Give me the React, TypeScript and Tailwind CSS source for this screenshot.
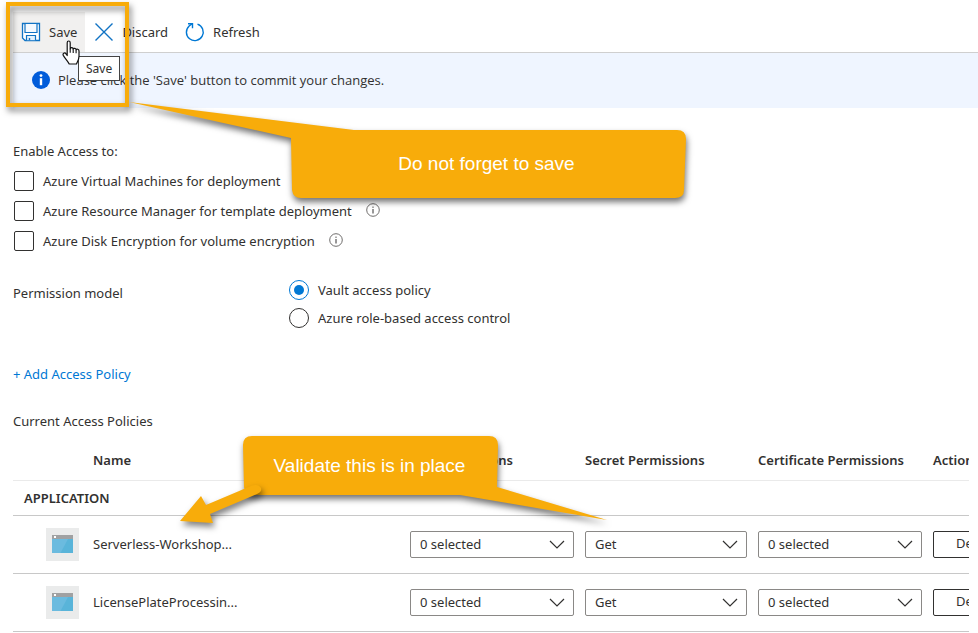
import type { ReactNode } from "react";

const SaveIcon = () => (
  <svg className="size-5 shrink-0" viewBox="0 0 20 20" fill="none" aria-hidden="true">
    <path d="M1.500 1.500h17v17H4l-2.500-2.500z" fill="#fff" stroke="#1173c4" strokeWidth="1.300" />
    <path d="M4 2v8.500h12V2" fill="#f4f9fe" stroke="#1173c4" strokeWidth="1.200" />
    <path d="M5.500 18.200v-4.700h9v4.700" fill="#e3f1fc" stroke="#1173c4" strokeWidth="1.200" />
    <path d="M8.500 18.200v-2.200" stroke="#1173c4" strokeWidth="1.400" />
  </svg>
);

const DiscardIcon = () => (
  <svg className="size-5 shrink-0" viewBox="0 0 20 20" fill="none" aria-hidden="true">
    <path d="M1.5 1.5l17 17M18.5 1.5l-17 17" stroke="#1173c4" strokeWidth="1.4" />
  </svg>
);

const RefreshIcon = () => (
  <svg className="size-5 shrink-0" viewBox="0 0 20 20" fill="none" aria-hidden="true">
    <path d="M12.500 2.200A8.400 8.400 0 1 1 4.200 3.900L7.200 1.800" stroke="#0078d4" strokeWidth="1.400" />
    <path d="M3 1.700h4.500v4.500" stroke="#0078d4" strokeWidth="1.400" />
  </svg>
);

const InfoBadge = () => (
  <svg className="size-[18px] shrink-0" viewBox="0 0 18 18" aria-hidden="true">
    <circle cx="9" cy="9" r="9" fill="#015cda" />
    <rect x="7.8" y="7.2" width="2.4" height="7" fill="#fff" />
    <circle cx="9" cy="4.6" r="1.4" fill="#fff" />
  </svg>
);

const InfoHint = () => (
  <svg className="mb-[3px] size-[14px] shrink-0" viewBox="0 0 14 14" fill="none" aria-hidden="true">
    <circle cx="7" cy="7" r="6.3" stroke="#605e5c" strokeWidth="0.9" />
    <path d="M7 6v4.5M7 3.6v1.2" stroke="#323130" strokeWidth="1" />
  </svg>
);

const AppIcon = () => (
  <span className="flex size-[33px] items-center justify-center bg-[#eaebeb]">
    <svg className="h-[18px] w-[21px]" viewBox="0 0 21 18" aria-hidden="true">
      <rect width="21" height="18" fill="#59b4d9" />
      <path d="M0 4h16L8.5 18H0z" fill="#6bbbdf" />
      <rect width="21" height="4" fill="#a0a1a2" />
      <rect x="2" y="1" width="2" height="2" fill="#fff" />
    </svg>
  </span>
);

const HandCursor = () => (
  <svg className="absolute left-[62px] top-[40px] h-[25px] w-[19px]" viewBox="0 0 19 25" aria-hidden="true">
    <path
      d="M5.2 15.5V2.8c0-2.4 3-2.4 3 0v6c.3-1.6 2.9-1.5 3 .3.5-1.3 2.9-1 2.9.7.6-1 2.9-.8 2.9 1.2v5.2c0 3.600-1.600 5.200-2.500 7.800H7.200C5.800 20.800 3.100 18.600 1.300 15.400c-1-1.900 1.400-3.300 2.700-1.600z"
      fill="#fff"
      stroke="#111"
      strokeWidth="1.2"
      strokeLinejoin="round"
    />
    <path d="M8.2 8.8v4M11.2 9.2v3.8M14.1 9.9v3.4" stroke="#111" strokeWidth="1.1" />
  </svg>
);

function ToolbarButton({ icon, label, active }: { icon: ReactNode; label: string; active?: boolean }) {
  return (
    <button type="button" className={`flex h-10 items-center gap-2 px-2 ${active ? "bg-[#f1f0ef]" : ""}`}>
      {icon}
      {label}
    </button>
  );
}

const accessOptions = [
  { id: "vm", label: "Azure Virtual Machines for deployment" },
  { id: "arm", label: "Azure Resource Manager for template deployment" },
  { id: "disk", label: "Azure Disk Encryption for volume encryption" },
];

const models = [
  { id: "vault", label: "Vault access policy" },
  { id: "rbac", label: "Azure role-based access control" },
];

const policies = [
  { name: "Serverless-Workshop...", key: "0 selected", secret: "Get", certificate: "0 selected" },
  { name: "LicensePlateProcessin...", key: "0 selected", secret: "Get", certificate: "0 selected" },
];

const columns = ["Name", "Key Permissions", "Secret Permissions", "Certificate Permissions", "Action"];

function PermissionSelect({ value, label }: { value: string; label: string }) {
  return (
    <div className="relative mr-[11px]">
      <select
        aria-label={label}
        defaultValue={value}
        className="block h-[27px] w-full appearance-none rounded-xs border border-[#8a8886] bg-white px-[9px]"
      >
        <option>{value}</option>
      </select>
      <svg
        className="pointer-events-none absolute right-[9px] top-[9px] h-[9px] w-4"
        viewBox="0 0 16 9"
        fill="none"
        aria-hidden="true"
      >
        <path d="M1 1l7 7 7-7" stroke="#323130" strokeWidth="1.2" />
      </svg>
    </div>
  );
}

function AccessOptions() {
  return (
    <fieldset>
      <legend className="h-5">Enable Access to:</legend>
      <div className="mt-[10px] flex flex-col gap-[10px] pl-px">
        {accessOptions.map((o) => (
          <div key={o.id} className="flex h-5 items-center">
            <input
              id={o.id}
              type="checkbox"
              className="size-5 shrink-0 appearance-none rounded-xs border border-[#323130] bg-white"
            />
            <label htmlFor={o.id} className="pl-[9px] pr-[14px]">
              {o.label}
            </label>
            <InfoHint />
          </div>
        ))}
      </div>
    </fieldset>
  );
}

function PermissionModel() {
  return (
    <div role="radiogroup" aria-labelledby="model" className="mt-[29px] grid grid-cols-[276px_1fr]">
      <span id="model" className="pt-[3px]">
        Permission model
      </span>
      <div className="flex flex-col gap-2">
        {models.map((m, i) => (
          <div key={m.id} className="flex h-5 items-center gap-[9px]">
            <input
              id={m.id}
              type="radio"
              name="model"
              defaultChecked={i === 0}
              className="grid size-5 shrink-0 appearance-none place-items-center rounded-full border border-[#323130] before:size-[10px] before:rounded-full checked:border-[#0078d4] checked:before:bg-[#0078d4]"
            />
            <label htmlFor={m.id}>{m.label}</label>
          </div>
        ))}
      </div>
    </div>
  );
}

function PolicyTable() {
  return (
    <div className="mr-[9px] overflow-hidden">
      <table className="w-[calc(100%+64px)] table-fixed border-collapse text-left">
        <colgroup>
          <col className="w-[80px]" />
          <col />
          <col className="w-[175px]" />
          <col className="w-[173px]" />
          <col className="w-[175px]" />
          <col className="w-[100px]" />
        </colgroup>
        <thead>
          <tr className="h-[41px] border-b border-[#eaeaea]">
            <th aria-label="Type" />
            {columns.map((c) => (
              <th key={c} className="pt-[2px] font-semibold">
                {c}
              </th>
            ))}
          </tr>
        </thead>
        <tbody>
          <tr className="h-[35px] border-b border-[#c8c8c8]">
            <th colSpan={6} className="pl-[11px] font-semibold">
              APPLICATION
            </th>
          </tr>
          {policies.map((p) => (
            <tr key={p.name} className="h-[58px] border-b border-[#c8c8c8]">
              <td className="pl-[33px]">
                <AppIcon />
              </td>
              <td>{p.name}</td>
              <td>
                <PermissionSelect value={p.key} label={`Key permissions for ${p.name}`} />
              </td>
              <td>
                <PermissionSelect value={p.secret} label={`Secret permissions for ${p.name}`} />
              </td>
              <td>
                <PermissionSelect value={p.certificate} label={`Certificate permissions for ${p.name}`} />
              </td>
              <td>
                <button
                  type="button"
                  className="block h-[27px] rounded-xs border border-[#323130] px-[22px] pb-[2px]"
                >
                  Delete
                </button>
              </td>
            </tr>
          ))}
        </tbody>
      </table>
    </div>
  );
}

function Annotations() {
  return (
    <>
      <div className="pointer-events-none absolute left-[6px] top-[2px] h-[105px] w-[123px] border-4 border-[#f8ac0a] drop-shadow-[2px_4px_3px_rgba(0,0,0,0.5)]" />
      <svg
        className="pointer-events-none absolute left-0 top-0 h-[633px] w-[978px] drop-shadow-[1px_4px_3px_rgba(0,0,0,0.55)]"
        viewBox="0 0 978 633"
        fill="#f8ac0a"
        aria-hidden="true"
      >
        <path d="M129 102L354 130H677Q686 130 686 139L684 190Q684 198 675 198H301Q293 198 292 190L291 138Z" />
        <path d="M252 436H489Q498 436 498 445L497 487L607 520L460 495H253Q245 495 244 487L243 445Q243 436 252 436Z" />
      </svg>
      <svg
        className="pointer-events-none absolute left-[170px] top-[470px] h-[70px] w-[110px] drop-shadow-[2px_4px_3px_rgba(0,0,0,0.5)]"
        viewBox="170 470 110 70"
        fill="#f8ac0a"
        aria-hidden="true"
      >
        <path d="M180 521L201 496L206 505L251 486Q258 483 261 488Q262 492 257 494L210 514L213 523Z" />
      </svg>
      <p className="absolute left-[291px] top-[130px] flex h-[68px] w-[391px] items-center justify-center font-['Liberation_Sans',Arial,sans-serif] text-[19px] text-white">
        Do not forget to save
      </p>
      <p className="absolute left-[243px] top-[436px] flex h-[59px] w-[253px] items-center justify-center font-['Liberation_Sans',Arial,sans-serif] text-[19px] text-white">
        Validate this is in place
      </p>
    </>
  );
}

export default function App() {
  return (
    <div className="relative overflow-hidden bg-white pl-[13px] pt-3 font-['Noto_Sans',sans-serif] text-[13px] leading-5 text-[#323130]">
      <div role="toolbar" aria-label="Access policies" className="flex gap-px border-b border-[#cfcfcf]">
        <ToolbarButton icon={<SaveIcon />} label="Save" active />
        <ToolbarButton icon={<DiscardIcon />} label="Discard" />
        <ToolbarButton icon={<RefreshIcon />} label="Refresh" />
      </div>
      <div
        role="status"
        className="flex h-[55px] items-center gap-2 bg-[#eff5ff] pb-[2px] pl-[19px] font-['Open_Sans',sans-serif]"
      >
        <InfoBadge />
        Please click the 'Save' button to commit your changes.
      </div>
      <main className="pt-[33px]">
        <AccessOptions />
        <PermissionModel />
        <a href="#add" className="mt-9 block w-fit text-[#0078d4]">
          + Add Access Policy
        </a>
        <h2 className="mb-2 mt-[27px]">Current Access Policies</h2>
        <PolicyTable />
      </main>
      <div
        role="tooltip"
        className="absolute left-[78px] top-[56px] border border-[#444] bg-white px-[7px] text-xs leading-[23px]"
      >
        Save
      </div>
      <HandCursor />
      <Annotations />
    </div>
  );
}
